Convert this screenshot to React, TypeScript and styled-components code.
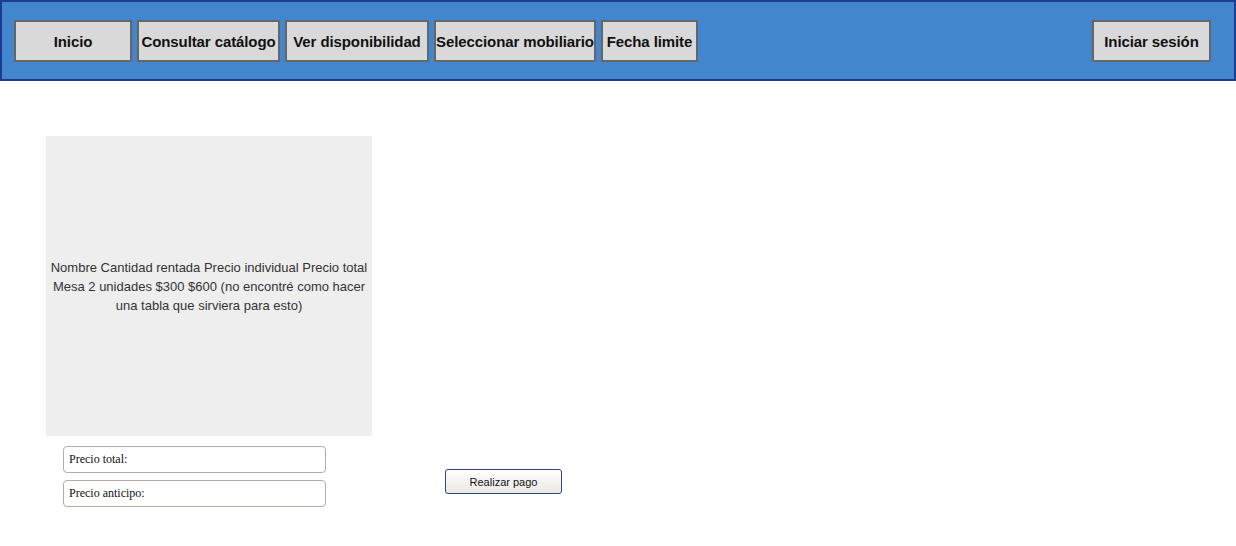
import styled, { createGlobalStyle } from "styled-components";

const GlobalStyle = createGlobalStyle`
  body {
    margin: 0;
    background: #ffffff;
    font-family: "Liberation Sans", Arial, sans-serif;
  }
`;

const navItems = [
  { label: "Inicio", width: 118 },
  { label: "Consultar catálogo", width: 143 },
  { label: "Ver disponibilidad", width: 144 },
  { label: "Seleccionar mobiliario", width: 162 },
  { label: "Fecha limite", width: 97 },
];

const App = () => {
  return (
    <>
      <GlobalStyle />
      <Header>
        <NavGroup>
          {navItems.map((item) => (
            <NavButton key={item.label} $width={item.width}>
              {item.label}
            </NavButton>
          ))}
        </NavGroup>
        <NavButton $width={119}>Iniciar sesión</NavButton>
      </Header>
      <Main>
        <OrderColumn>
          <SummaryBox>
            Nombre Cantidad rentada Precio individual Precio total Mesa 2
            unidades $300 $600 (no encontré como hacer una tabla que sirviera
            para esto)
          </SummaryBox>
          <Fields>
            <PriceField readOnly value="Precio total:" />
            <PriceField readOnly value="Precio anticipo:" />
          </Fields>
        </OrderColumn>
        <PayButton>Realizar pago</PayButton>
      </Main>
    </>
  );
};

export default App;

const Header = styled.header`
  display: flex;
  justify-content: space-between;
  align-items: center;
  height: 81px;
  box-sizing: border-box;
  padding: 18px 23px 17px 12px;
  background-color: #4287cd;
  border: 2px solid #1f3a93;
`;

const NavGroup = styled.nav`
  display: flex;
  gap: 5px;
`;

const NavButton = styled.button<{ $width: number }>`
  width: ${(p) => p.$width}px;
  height: 42px;
  padding: 0;
  white-space: nowrap;
  background-color: #d9d9d9;
  border: 2px solid #666666;
  color: #111111;
  font-family: "Liberation Sans", Arial, sans-serif;
  font-size: 15px;
  font-weight: bold;
  letter-spacing: -0.1px;
  cursor: pointer;
`;

const Main = styled.main`
  display: flex;
  align-items: flex-end;
  gap: 73px;
  padding: 55px 0 0 46px;
`;

const OrderColumn = styled.div`
  display: flex;
  flex-direction: column;
`;

const SummaryBox = styled.div`
  width: 326px;
  height: 300px;
  box-sizing: border-box;
  display: flex;
  align-items: center;
  justify-content: center;
  text-align: center;
  padding: 0;
  background-color: #eeeeee;
  color: #333333;
  font-family: "Liberation Sans", Arial, sans-serif;
  font-size: 13px;
  line-height: 19px;
`;

const Fields = styled.div`
  display: flex;
  flex-direction: column;
  gap: 7px;
  margin: 10px 0 0 17px;
`;

const PriceField = styled.input`
  width: 263px;
  height: 27px;
  box-sizing: border-box;
  padding: 0 5px;
  border: 1px solid #b5aca4;
  border-radius: 4px;
  background: #ffffff;
  color: #111111;
  font-family: "Liberation Serif", "Times New Roman", serif;
  font-size: 12px;
  outline: none;
`;

const PayButton = styled.button`
  width: 117px;
  height: 25px;
  margin-bottom: 13px;
  border: 1px solid #2c4a78;
  border-radius: 3px;
  background: linear-gradient(#ffffff, #ebe8e3);
  color: #111111;
  font-family: "Liberation Sans", Arial, sans-serif;
  font-size: 11px;
  cursor: pointer;
`;
